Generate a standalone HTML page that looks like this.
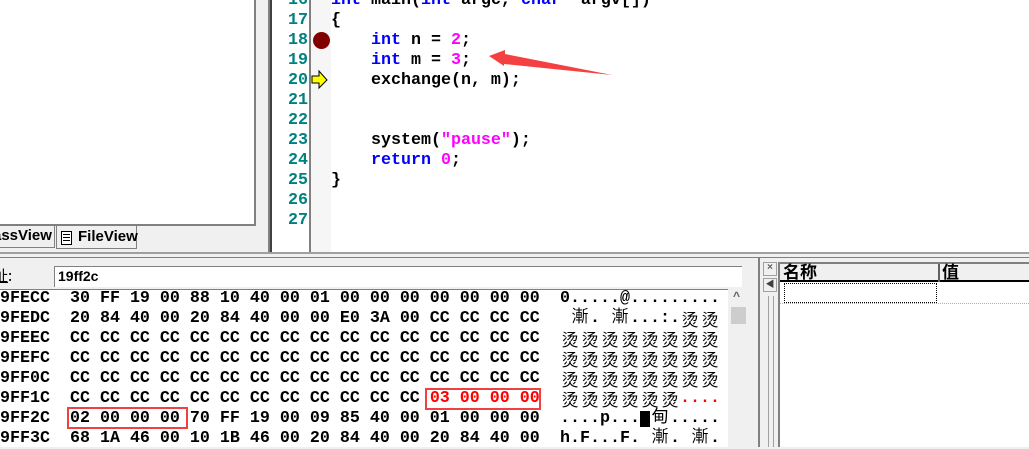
<!DOCTYPE html>
<html><head><meta charset="utf-8"><style>
*{margin:0;padding:0;box-sizing:border-box}
body{width:1029px;height:447px;overflow:hidden;background:#f0f0f0;position:relative;font-family:"Liberation Mono","Noto Sans CJK SC",monospace;font-weight:bold;font-size:16.67px}
.a{position:absolute}
.ln{position:absolute;left:273px;width:35px;text-align:right;color:#008080;height:20px;line-height:20px}
.cd{position:absolute;left:331px;height:20px;line-height:20px;white-space:pre;color:#000}
.k{color:#0000ff}.n{color:#ff00ff}
.r{position:absolute;left:0;height:20px;line-height:20px;white-space:pre;color:#000;overflow:hidden}
.s{position:absolute;left:560px;height:20px;display:flex;align-items:flex-start;white-space:pre;color:#000}
.s span{display:block;width:10px;height:20px;line-height:20px;text-align:center}
.s .c{width:20px;font-family:"Noto Sans CJK SC",sans-serif;font-weight:normal;font-size:17px;line-height:20px}
.s .d{width:20px;position:relative;font-family:"WenQuanYi Zen Hei","Noto Sans CJK SC",sans-serif;font-weight:normal;font-size:17px;line-height:20px;top:-4px}
</style></head><body>
<div class="a" style="left:0;top:0;width:256px;height:226px;background:#fff;border-right:2px solid #808080;border-bottom:2px solid #808080"></div>
<div class="a" style="left:0;top:226px;width:55px;height:22px;border-right:1px solid #808080;border-bottom:1px solid #808080;background:#f0f0f0;font-family:'Liberation Sans',sans-serif;font-size:15px;line-height:20px;overflow:hidden;white-space:nowrap"><span style="margin-left:-7px">assView</span></div>
<div class="a" style="left:56px;top:226px;width:81px;height:23px;border:1px solid #808080;border-top:none;background:#f0f0f0;font-family:'Liberation Sans',sans-serif;font-size:15px;line-height:21px;padding-left:21px">FileView</div>
<div class="a" style="left:61px;top:231px;width:11px;height:14px;border:1px solid #000;background:#fff"></div>
<div class="a" style="left:63px;top:234px;width:7px;height:7px;border-top:1px solid #000;border-bottom:1px solid #000"></div>
<div class="a" style="left:63px;top:237px;width:7px;height:1px;background:#000"></div>
<div class="a" style="left:268px;top:0;width:2px;height:252px;background:#808080"></div>
<div class="a" style="left:270px;top:0;width:2px;height:252px;background:#404040"></div>
<div class="a" style="left:272px;top:0;width:757px;height:252px;background:#fff"></div>
<div class="a" style="left:309px;top:0;width:2px;height:252px;background:#808080"></div>
<div class="a" style="left:311px;top:0;width:20px;height:252px;background:#f6f6f6"></div>
<div class="a" style="left:0;top:252px;width:1029px;height:2px;background:#a0a0a0"></div>
<div class="a" style="left:0;top:257px;width:1029px;height:1px;background:#808080"></div>
<div class="ln" style="top:-9px">16</div><div class="ln" style="top:11px">17</div><div class="ln" style="top:31px">18</div><div class="ln" style="top:51px">19</div><div class="ln" style="top:71px">20</div><div class="ln" style="top:91px">21</div><div class="ln" style="top:111px">22</div><div class="ln" style="top:131px">23</div><div class="ln" style="top:151px">24</div><div class="ln" style="top:171px">25</div><div class="ln" style="top:191px">26</div><div class="ln" style="top:211px">27</div>
<div class="cd" style="top:-9px"><span class="k">int</span> main(<span class="k">int</span> argc, <span class="k">char</span>* argv[])</div>
<div class="cd" style="top:11px">{</div>
<div class="cd" style="top:31px">    <span class="k">int</span> n = <span class="n">2</span>;</div>
<div class="cd" style="top:51px">    <span class="k">int</span> m = <span class="n">3</span>;</div>
<div class="cd" style="top:71px">    exchange(n, m);</div>
<div class="cd" style="top:131px">    system(<span class="n">"pause"</span>);</div>
<div class="cd" style="top:151px">    <span class="k">return</span> <span class="n">0</span>;</div>
<div class="cd" style="top:171px">}</div>
<div class="a" style="left:313px;top:32px;width:17px;height:17px;border-radius:50%;background:#800000"></div>
<svg class="a" style="left:311px;top:70px" width="18" height="20"><path d="M1 6H8V1L16 10L8 18V13H1Z" fill="#ffff00" stroke="#000" stroke-width="1"/></svg>
<svg class="a" style="left:480px;top:40px" width="150" height="45"><path d="M9 16L25 10L25 14L132 35L24 24L24 26Z" fill="#f44040"/></svg>
<div class="a" style="left:0;top:262px;width:750px;height:185px;background:#f0f0f0"></div>
<div class="a" style="left:0;top:266px;font-family:'Noto Sans CJK SC',sans-serif;font-weight:normal;font-size:15px;line-height:20px"><span style="margin-left:-7px;text-decoration:underline">址</span>:</div>
<div class="a" style="left:54px;top:266px;width:688px;height:21px;background:#fff;border-left:1px solid #808080;border-top:1px solid #808080;font-family:'Liberation Sans',sans-serif;font-size:14px;line-height:19px;padding-left:3px">19ff2c</div>
<div class="a" style="left:0;top:289px;width:728px;height:158px;background:#fff;border-top:1px solid #808080"></div>
<div class="a" style="left:729px;top:289px;width:18px;height:158px;background:#f0f0f0"></div>
<div class="a" style="left:731px;top:307px;width:15px;height:17px;background:#cdcdcd"></div>
<div class="a" style="left:733px;top:290px;font-size:12px;color:#606060">^</div>
<div class="r" style="top:289px">9FECC  30 FF 19 00 88 10 40 00 01 00 00 00 00 00 00 00</div>
<div class="r" style="top:309px">9FEDC  20 84 40 00 20 84 40 00 00 E0 3A 00 CC CC CC CC</div>
<div class="r" style="top:329px">9FEEC  CC CC CC CC CC CC CC CC CC CC CC CC CC CC CC CC</div>
<div class="r" style="top:349px">9FEFC  CC CC CC CC CC CC CC CC CC CC CC CC CC CC CC CC</div>
<div class="r" style="top:369px">9FF0C  CC CC CC CC CC CC CC CC CC CC CC CC CC CC CC CC</div>
<div class="r" style="top:389px">9FF1C  CC CC CC CC CC CC CC CC CC CC CC CC <span style="color:#f00">03 00 00 00</span></div>
<div class="r" style="top:409px">9FF2C  02 00 00 00 70 FF 19 00 09 85 40 00 01 00 00 00</div>
<div class="r" style="top:429px">9FF3C  68 1A 46 00 10 1B 46 00 20 84 40 00 20 84 40 00</div>
<div class="s" style="top:289px"><span>0</span><span>.</span><span>.</span><span>.</span><span>.</span><span>.</span><span>@</span><span>.</span><span>.</span><span>.</span><span>.</span><span>.</span><span>.</span><span>.</span><span>.</span><span>.</span></div>
<div class="s" style="top:309px"><span> </span><span class="d">漸</span><span>.</span><span> </span><span class="d">漸</span><span>.</span><span>.</span><span>.</span><span>:</span><span>.</span><span class="c">烫</span><span class="c">烫</span></div>
<div class="s" style="top:329px"><span class="c">烫</span><span class="c">烫</span><span class="c">烫</span><span class="c">烫</span><span class="c">烫</span><span class="c">烫</span><span class="c">烫</span><span class="c">烫</span></div>
<div class="s" style="top:349px"><span class="c">烫</span><span class="c">烫</span><span class="c">烫</span><span class="c">烫</span><span class="c">烫</span><span class="c">烫</span><span class="c">烫</span><span class="c">烫</span></div>
<div class="s" style="top:369px"><span class="c">烫</span><span class="c">烫</span><span class="c">烫</span><span class="c">烫</span><span class="c">烫</span><span class="c">烫</span><span class="c">烫</span><span class="c">烫</span></div>
<div class="s" style="top:389px"><span class="c">烫</span><span class="c">烫</span><span class="c">烫</span><span class="c">烫</span><span class="c">烫</span><span class="c">烫</span><span style="color:#f00">.</span><span style="color:#f00">.</span><span style="color:#f00">.</span><span style="color:#f00">.</span></div>
<div class="s" style="top:409px"><span>.</span><span>.</span><span>.</span><span>.</span><span>p</span><span>.</span><span>.</span><span>.</span><span style="background:#000;width:10px;height:16px;margin-top:2px"></span><span class="d">甸</span><span>.</span><span>.</span><span>.</span><span>.</span><span>.</span></div>
<div class="s" style="top:429px"><span>h</span><span>.</span><span>F</span><span>.</span><span>.</span><span>.</span><span>F</span><span>.</span><span> </span><span class="d">漸</span><span>.</span><span> </span><span class="d">漸</span><span>.</span></div>
<div class="a" style="left:425px;top:388px;width:116px;height:22px;border:2px solid #f04040"></div>
<div class="a" style="left:67px;top:407px;width:121px;height:22px;border:2px solid #f04040"></div>
<div class="a" style="left:758px;top:258px;width:2px;height:189px;background:#808080"></div>
<div class="a" style="left:763px;top:262px;width:14px;height:14px;border:1px solid #a0a0a0;font-size:10px;line-height:11px;text-align:center;color:#606060">×</div>
<div class="a" style="left:763px;top:278px;width:14px;height:14px;border:1px solid #a0a0a0;font-size:9px;line-height:12px;text-align:center;color:#404040">◀</div>
<div class="a" style="left:768px;top:296px;width:1px;height:151px;background:#a0a0a0"></div>
<div class="a" style="left:773px;top:296px;width:1px;height:151px;background:#a0a0a0"></div>
<div class="a" style="left:778px;top:262px;width:251px;height:185px;background:#fff;border-left:2px solid #808080;border-top:2px solid #808080"></div>
<div class="a" style="left:780px;top:264px;width:249px;height:18px;background:#f0f0f0;border-bottom:2px solid #000"></div>
<div class="a" style="left:783px;top:260px;font-family:'Noto Sans CJK SC',sans-serif;font-size:17px;line-height:22px">名称</div>
<div class="a" style="left:938px;top:264px;width:2px;height:18px;background:#606060"></div>
<div class="a" style="left:942px;top:260px;font-family:'Noto Sans CJK SC',sans-serif;font-size:17px;line-height:22px">值</div>
<div class="a" style="left:784px;top:283px;width:153px;height:20px;border:1px dotted #000"></div>
<div class="a" style="left:780px;top:303px;width:249px;height:1px;border-top:1px dotted #b0b0b0"></div>
</body></html>
